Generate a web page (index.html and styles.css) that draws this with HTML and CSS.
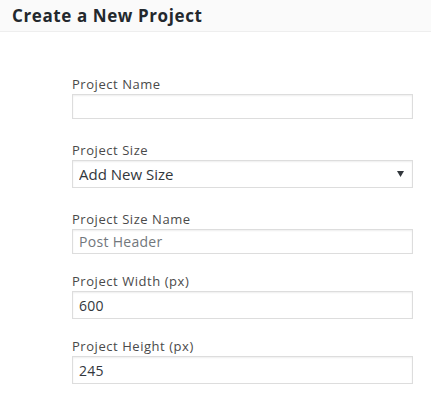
FILE: index.html
```html
<!DOCTYPE html>
<html>
<head>
<meta charset="utf-8">
<link rel="stylesheet" href="styles.css">
</head>
<body>
<div class="header"><h1 class="title">Create a New Project</h1></div>
<form class="form">
  <div class="section">
    <div class="field">
      <label class="label">Project Name</label>
      <input class="input" type="text" value="">
    </div>
    <div class="field">
      <label class="label">Project Size</label>
      <div class="select-wrap">
        <select class="select"><option>Add New Size</option></select>
        <span class="arrow"><svg width="7" height="6" viewBox="0 0 7 6"><path d="M0 0H7L3.5 6Z" fill="#32373c"/></svg></span>
      </div>
    </div>
  </div>
  <div class="section tight">
    <div class="field">
      <label class="label">Project Size Name</label>
      <input class="input" type="text" placeholder="Post Header">
    </div>
    <div class="field">
      <label class="label">Project Width (px)</label>
      <input class="input tall" type="text" value="600">
    </div>
    <div class="field">
      <label class="label">Project Height (px)</label>
      <input class="input tall" type="text" value="245">
    </div>
  </div>
</form>
</body>
</html>
```
FILE: styles.css
```css
html, body { margin: 0; padding: 0; background: #fff; }
body { font-family: "Open Sans", "Liberation Sans", sans-serif; color: #444; }
.header {
  height: 32px;
  background: #fafafa;
  border-bottom: 1px solid #eeeeee;
  padding-left: 12px;
  box-sizing: border-box;
  display: flex;
  align-items: center;
}
.title {
  margin: 0;
  font-size: 17px;
  font-weight: 700;
  color: #23282d;
  line-height: 20px;
  letter-spacing: 0.6px;
}
.form {
  padding: 43px 18px 0 72px;
  display: flex;
  flex-direction: column;
  gap: 22px;
}
.section { display: flex; flex-direction: column; gap: 22px; }
.section.tight { gap: 18px; }
.field { display: flex; flex-direction: column; gap: 1px; }
.label { font-size: 13px; line-height: 18px; color: #4a4a4a; letter-spacing: 0.55px; }
.input, .select {
  box-sizing: border-box;
  width: 341px;
  height: 25px;
  margin: 0;
  border: 1px solid #dddddd;
  box-shadow: inset 0 1px 2px rgba(0,0,0,0.07);
  background: #fff;
  font-family: "Open Sans", "Liberation Sans", sans-serif;
  font-size: 14px;
  color: #32373c;
  padding: 0 6px;
  outline: none;
  border-radius: 0;
  letter-spacing: 0.3px;
}
.input.tall { height: 28px; }
.input::placeholder { color: #72777c; }
.select-wrap { position: relative; width: 341px; }
.select {
  height: 28px;
  -webkit-appearance: none;
  appearance: none;
  font-size: 15px;
  padding: 0 6px;
  display: block;
  letter-spacing: 0;
}
.arrow {
  position: absolute;
  right: 9px;
  top: 11px;
  line-height: 0;
  pointer-events: none;
}
```
